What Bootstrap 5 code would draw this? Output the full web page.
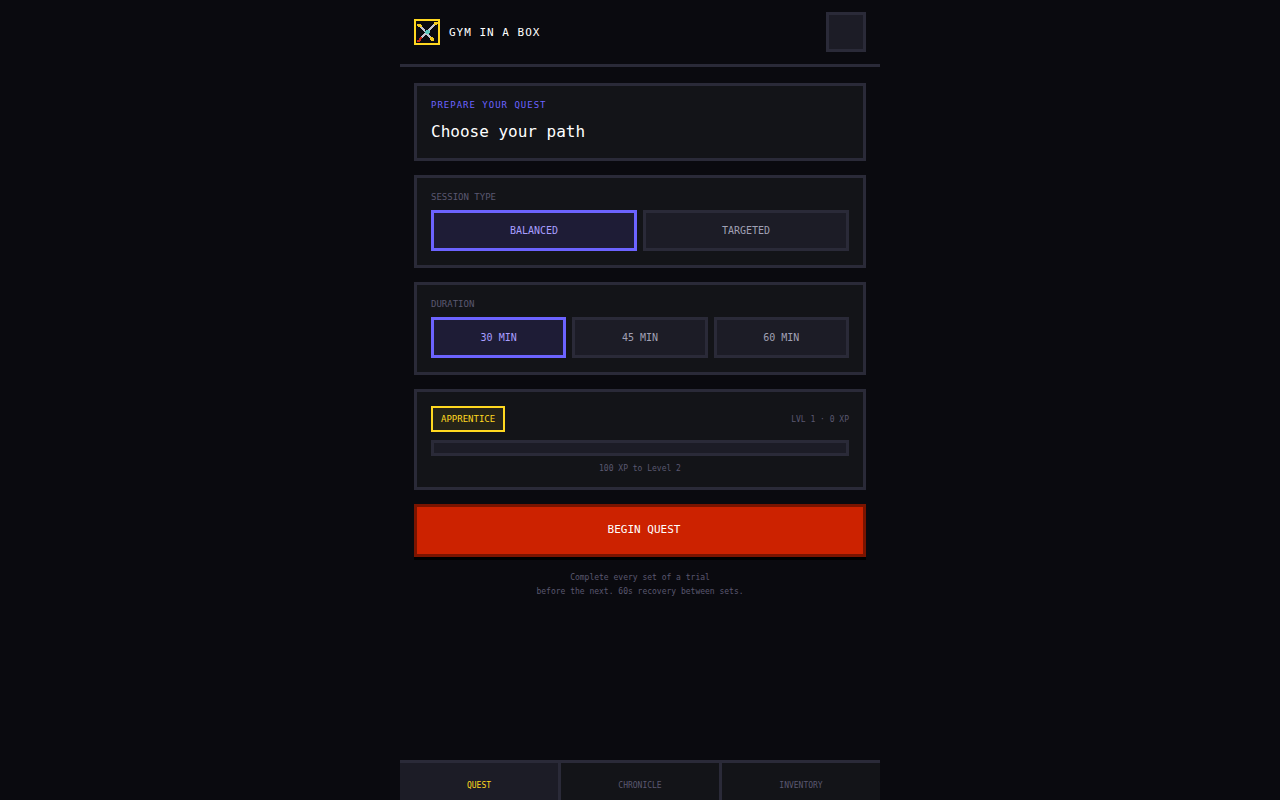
<!DOCTYPE html>
<html lang="en" data-bs-theme="dark">
<head>
<meta charset="utf-8">
<meta name="viewport" content="width=device-width, initial-scale=1">
<title>Gym in a Box</title>
<link href="https://cdn.jsdelivr.net/npm/bootstrap@5.3.0/dist/css/bootstrap.min.css" rel="stylesheet">
<style>
:root { --line: #2a2a38; --panel: #131418; --raised: #1c1c26; --muted: #5a5870; --gold: #ffd820; --accent: #6c63ff; }
body { background: #0a0a0f; color: #fff; font-family: "DejaVu Sans Mono", monospace; font-size: 8px; line-height: 10px; }
.shell { max-width: 480px; }
.topbar { padding: 12px 14px; border-bottom: 3px solid var(--line); }
.brand { gap: 9px; font-size: 11px; line-height: 17px; letter-spacing: 1px; }
.logo { width: 26px; height: 26px; border: 2px solid var(--gold); }
.avatar { width: 40px; height: 40px; border: 3px solid var(--line); background: var(--raised); }
.stack { padding: 16px 14px 64px; gap: 14px; }
.panel { padding: 14px; border: 3px solid var(--line); background: var(--panel); }
.caption { font-size: 9px; line-height: 10px; margin-bottom: 8px; color: var(--muted); }
.eyebrow { color: var(--accent); letter-spacing: 1px; margin-bottom: 9px; }
.heading { font-size: 16px; line-height: 25px; font-weight: 400; }
.options { gap: 6px; }
.option { --bs-btn-padding-y: 0; --bs-btn-border-width: 3px; --bs-btn-border-radius: 0; --bs-btn-font-size: 10px; --bs-btn-line-height: 35px;
  --bs-btn-color: #a0a0b4; --bs-btn-bg: var(--raised); --bs-btn-border-color: var(--line);
  --bs-btn-hover-color: #fff; --bs-btn-hover-bg: var(--raised); --bs-btn-hover-border-color: var(--accent);
  --bs-btn-active-color: #a89eff; --bs-btn-active-bg: #1e1c36; --bs-btn-active-border-color: var(--accent); flex: 1 1 0; }
.rank { padding: 6px 8px; border: 2px solid var(--gold); background: #252318; color: var(--gold); font-size: 9px; }
.dim { color: var(--muted); }
.level { line-height: 11px; }
.progress-panel { padding-bottom: 13px; }
.xp { height: 16px; margin: 8px 0; border: 3px solid var(--line); border-radius: 0; background: var(--raised); }
.begin { --bs-btn-border-width: 3px; --bs-btn-border-radius: 0; --bs-btn-font-size: 11px; --bs-btn-line-height: 16px;
  --bs-btn-color: #fff; --bs-btn-bg: #cc2200; --bs-btn-border-color: #7a1400; --bs-btn-hover-color: #fff; --bs-btn-hover-bg: #dd2a06; --bs-btn-hover-border-color: #7a1400;
  padding: 15px 8px 16px 16px; box-shadow: 0 3px 0 #000; }
.hint { line-height: 14px; }
.tabs { border-top: 3px solid var(--line); background: var(--line); gap: 3px; }
.tab { flex: 1 1 0; padding: 18px 4px 9px; background: var(--panel); color: var(--muted); }
.tab.active { background: var(--raised); color: var(--gold); }
</style>
</head>
<body>
<div class="shell mx-auto">
  <header class="topbar d-flex justify-content-between align-items-center">
    <div class="brand d-flex align-items-center">
      <svg class="logo" viewBox="0 0 22 22" shape-rendering="crispEdges" aria-hidden="true">
        <g fill="none" stroke="#c4c4d0" stroke-width="2">
          <path d="M4 5L15 17"/>
          <path d="M19 3L5 17"/>
        </g>
        <path fill="#f5cc20" d="M1 3h4v1h1v2h-4v-1h-1zM18 1h4v2h-1v1h-3zM14 16h3v1h1v3h-3v-1h-1z"/>
        <path fill="#c62a18" d="M4 16h2v2h-1v2h-1v1h-3v-2h2v-2h1z"/>
        <path fill="#5cc8be" d="M10 9h3v1h1v2h-1v1h-3v-1h-1v-2h1z"/>
      </svg>
      <span>GYM IN A BOX</span>
    </div>
    <div class="avatar"></div>
  </header>
  <main class="stack d-flex flex-column">
    <section class="panel">
      <div class="caption eyebrow">PREPARE YOUR QUEST</div>
      <h1 class="heading m-0">Choose your path</h1>
    </section>
    <section class="panel">
      <div class="caption" id="type">SESSION TYPE</div>
      <div class="options d-flex" role="group" aria-labelledby="type">
        <button type="button" class="btn option active">BALANCED</button>
        <button type="button" class="btn option">TARGETED</button>
      </div>
    </section>
    <section class="panel">
      <div class="caption" id="duration">DURATION</div>
      <div class="options d-flex" role="group" aria-labelledby="duration">
        <button type="button" class="btn option active">30 MIN</button>
        <button type="button" class="btn option">45 MIN</button>
        <button type="button" class="btn option">60 MIN</button>
      </div>
    </section>
    <section class="panel progress-panel">
      <div class="d-flex justify-content-between align-items-center">
        <span class="rank">APPRENTICE</span>
        <span class="dim level">LVL 1 · 0 XP</span>
      </div>
      <div class="xp progress" role="progressbar" aria-label="Experience" aria-valuenow="0" aria-valuemin="0" aria-valuemax="100"></div>
      <div class="dim text-center">100 XP to Level 2</div>
    </section>
    <button type="button" class="btn begin w-100">BEGIN QUEST</button>
    <p class="hint dim text-center m-0">Complete every set of a trial<br>before the next. 60s recovery between sets.</p>
  </main>
  <nav class="tabs shell mx-auto d-flex fixed-bottom">
    <a href="#" class="tab active text-center text-decoration-none" aria-current="page">QUEST</a>
    <a href="#" class="tab text-center text-decoration-none">CHRONICLE</a>
    <a href="#" class="tab text-center text-decoration-none">INVENTORY</a>
  </nav>
</div>
<script src="https://cdn.jsdelivr.net/npm/bootstrap@5.3.0/dist/js/bootstrap.bundle.min.js"></script>
</body>
</html>
